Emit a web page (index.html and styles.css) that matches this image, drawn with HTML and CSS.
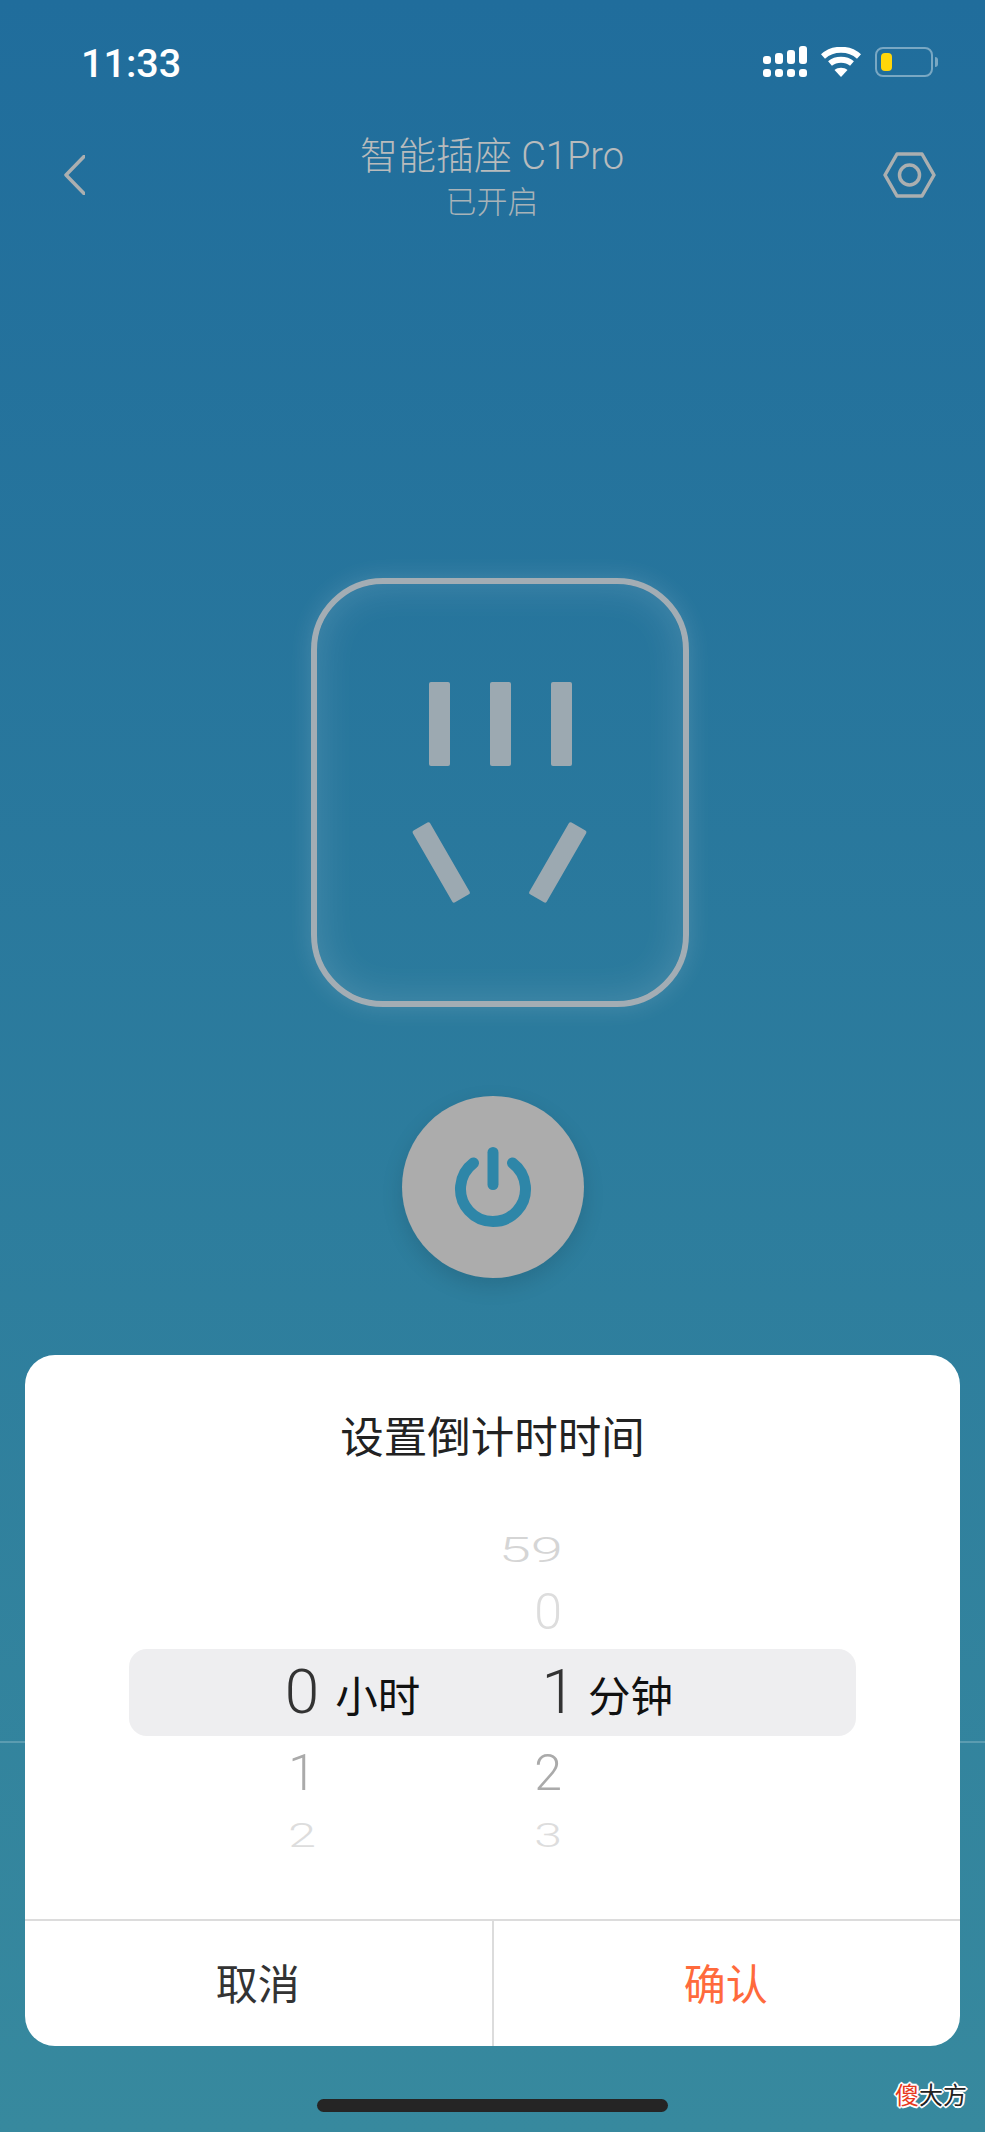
FILE: index.html
```html
<!DOCTYPE html>
<html lang="zh-CN">

<head>
    <meta charset="UTF-8">
    <title>智能插座 C1Pro</title>
    <link rel="stylesheet" href="styles.css">
</head>

<body>
    <div class="page">
        <div class="horizon"></div>

        <div class="status-bar">
            <span class="time">11:33</span>
            <div class="status-icons">
                <svg class="signal" width="44" height="32" viewBox="0 0 44 32">
                    <rect x="0" y="10" width="8" height="8" rx="3" />
                    <rect x="12" y="7" width="8" height="11" rx="3" />
                    <rect x="24" y="4" width="8" height="14" rx="3" />
                    <rect x="36" y="0" width="8" height="18" rx="3" />
                    <rect x="0" y="23" width="8" height="8" rx="3" />
                    <rect x="12" y="23" width="8" height="8" rx="3" />
                    <rect x="24" y="23" width="8" height="8" rx="3" />
                    <rect x="36" y="23" width="8" height="8" rx="3" />
                </svg>
                <svg class="wifi" width="40" height="30" viewBox="0 0 40 30">
                    <path d="M2 9.5 C12 0.5 28 0.5 38 9.5" />
                    <path d="M9 16.5 C15 11.5 25 11.5 31 16.5" />
                    <path class="wifi-dot" d="M13.5 23 C17 20 23 20 26.5 23 L20 30 Z" />
                </svg>
                <div class="battery">
                    <div class="battery-level"></div>
                </div>
                <div class="battery-nub"></div>
            </div>
        </div>

        <header class="nav">
            <svg class="back" width="21" height="40" viewBox="0 0 21 40">
                <path d="M20 1.5 L2 20 L20 38.5" />
            </svg>
            <div class="nav-title">
                <h1>智能插座 C1Pro</h1>
                <p>已开启</p>
            </div>
            <svg class="settings" width="53" height="46" viewBox="0 0 53 46">
                <path d="M14 2 H39 L51 23 L39 44 H14 L2 23 Z" />
                <circle cx="26.5" cy="23" r="10" />
            </svg>
        </header>

        <div class="socket">
            <svg width="366" height="417" viewBox="0 0 366 417">
                <rect x="112" y="98" width="21" height="84" rx="2" />
                <rect x="173" y="98" width="21" height="84" rx="2" />
                <rect x="234" y="98" width="21" height="84" rx="2" />
                <rect x="114" y="237" width="20" height="83" rx="2" transform="rotate(-30 124 278)" />
                <rect x="231" y="237" width="20" height="83" rx="2" transform="rotate(30 241 278)" />
            </svg>
        </div>

        <button class="power">
            <svg width="78" height="90" viewBox="0 0 78 90">
                <path d="M19.5 21 A32.5 32.5 0 1 0 58.5 21" />
                <path d="M39 10.5 V42.5" />
            </svg>
        </button>

        <section class="sheet">
            <h2 class="sheet-title">设置倒计时时间</h2>
            <div class="picker">
                <div class="row row-top">
                    <span class="cell"></span>
                    <span class="cell cell-min">59</span>
                </div>
                <div class="row row-dim">
                    <span class="cell"></span>
                    <span class="cell cell-min">0</span>
                </div>
                <div class="row row-selected">
                    <span class="cell">0<em class="unit">小时</em></span>
                    <span class="cell cell-min">1<em class="unit">分钟</em></span>
                </div>
                <div class="row row-near">
                    <span class="cell">1</span>
                    <span class="cell cell-min">2</span>
                </div>
                <div class="row row-far">
                    <span class="cell">2</span>
                    <span class="cell cell-min">3</span>
                </div>
            </div>
            <div class="actions">
                <button class="action">取消</button>
                <button class="action action-confirm">确认</button>
            </div>
        </section>

        <div class="home-bar"></div>
        <div class="watermark"><span class="watermark-red">傻</span>大方</div>
    </div>
</body>

</html>
```

FILE: styles.css
```css
* {
    box-sizing: border-box;
}

body {
    margin: 0;
    font-family: 'Noto Sans CJK SC', 'Noto Sans', sans-serif;
}

.page {
    position: relative;
    width: 985px;
    height: 2132px;
    overflow: hidden;
    display: flex;
    flex-direction: column;
    background: linear-gradient(180deg, #206d9c 0%, #37899e 100%);
}

.horizon {
    position: absolute;
    left: 0;
    right: 0;
    top: 1741px;
    height: 2px;
    background-color: rgba(255, 255, 255, 0.2);
}

/* Status bar */
.status-bar {
    height: 126px;
    padding: 0 47px 0 81px;
    display: flex;
    align-items: center;
    justify-content: space-between;
}

.time {
    font-family: 'Roboto', sans-serif;
    font-size: 39.5px;
    font-weight: 500;
    color: white;
}

.status-icons {
    display: flex;
    align-items: center;
    margin-top: -3px;
}

.signal {
    fill: white;
    margin-right: 14px;
}

.wifi {
    margin-right: 14px;
}

.wifi path {
    fill: none;
    stroke: white;
    stroke-width: 6;
}

.wifi .wifi-dot {
    fill: white;
    stroke: none;
}

.battery {
    width: 58px;
    height: 30px;
    padding: 4px;
    border: 2px solid rgba(255, 255, 255, 0.4);
    border-radius: 8px;
}

.battery-level {
    width: 11px;
    height: 100%;
    background-color: #ffd60a;
    border-radius: 4px;
}

.battery-nub {
    width: 3px;
    height: 10px;
    margin-left: 2px;
    background-color: rgba(255, 255, 255, 0.4);
    border-radius: 0 3px 3px 0;
}

/* Nav */
.nav {
    height: 98px;
    padding: 0 49px 0 64px;
    display: flex;
    align-items: center;
    justify-content: space-between;
}

.back path,
.settings path,
.settings circle {
    fill: none;
    stroke: #abafb0;
    stroke-width: 3.5;
    stroke-linecap: round;
    stroke-linejoin: round;
}

.nav-title {
    text-align: center;
    margin-left: 16px;
}

.nav-title h1 {
    margin: 0;
    font-family: 'Roboto', 'Noto Sans CJK SC', sans-serif;
    font-size: 38px;
    font-weight: 300;
    line-height: 50px;
    color: #b8bbbc;
}

.nav-title p {
    margin: 0;
    font-size: 31px;
    font-weight: 300;
    line-height: 38px;
    color: #a8b3b8;
}

/* Socket */
.socket {
    width: 378px;
    height: 429px;
    margin: 354px 0 0 311px;
    border: 6px solid #a3adb4;
    border-radius: 72px;
    box-shadow: 0 0 24px rgba(255, 255, 255, 0.14), inset 0 0 40px rgba(255, 255, 255, 0.15);
}

.socket svg {
    display: block;
    fill: #9ca9b1;
}

/* Power button */
.power {
    width: 182px;
    height: 182px;
    margin: 89px 0 0 401.5px;
    padding: 0;
    border: none;
    border-radius: 50%;
    background-color: #acacac;
    box-shadow: 0 8px 22px rgba(0, 0, 0, 0.12);
    display: flex;
    align-items: center;
    justify-content: center;
}

.power svg {
    fill: none;
    stroke: #2e86a8;
    stroke-width: 11;
    stroke-linecap: round;
}

/* Sheet */
.sheet {
    position: relative;
    width: 935px;
    height: 691px;
    margin: 77px 0 0 25px;
    background-color: white;
    border-radius: 30px;
    display: flex;
    flex-direction: column;
}

.sheet-title {
    margin: 0;
    height: 165px;
    font-size: 43.5px;
    font-weight: 400;
    line-height: 159px;
    text-align: center;
    color: #222;
}

.picker {
    height: 399px;
    font-family: 'Roboto', sans-serif;
    font-weight: 300;
}

.row {
    margin: 0 104px;
    padding-left: 50px;
    display: grid;
    grid-template-columns: 246px 246px;
    align-items: center;
}

.cell {
    position: relative;
    line-height: 1;
    text-align: center;
}

.cell-min {
    padding-right: 109px;
    text-align: right;
}

.row-top {
    height: 60px;
    font-size: 58px;
    color: #d5d5d5;
}

.row-top .cell {
    transform: scaleY(0.6);
}

.row-top .cell-min {
    padding-right: 108px;
}

.row-dim {
    height: 64px;
    margin-bottom: 5px;
    font-size: 50px;
    color: #ddd;
}

.row-near {
    height: 74px;
    font-size: 50px;
    color: #aaa;
}

.row-far {
    height: 52px;
    font-size: 50px;
    color: #ddd;
}

.row-far .cell {
    transform: scaleY(0.65);
}

.row-selected {
    height: 87px;
    padding-bottom: 2px;
    font-size: 62px;
    color: #333;
    background-color: #eeeef0;
    border-radius: 18px;
}

.row-selected .cell-min {
    padding-right: 95px;
}

.unit {
    position: absolute;
    top: 50%;
    margin: -28px 0 0 16px;
    font-family: 'Noto Sans CJK SC', sans-serif;
    font-size: 42.5px;
    font-style: normal;
    font-weight: 400;
    line-height: 60px;
    white-space: nowrap;
    text-align: left;
    color: #111;
}

.cell-min .unit {
    margin-left: 12px;
}

.actions {
    height: 127px;
    border-top: 2px solid #dcdcdc;
    display: grid;
    grid-template-columns: 1fr 1fr;
}

.action {
    padding: 0 2px 5px 0;
    border: none;
    background: none;
    font-family: inherit;
    font-size: 42px;
    color: #333;
}

.action-confirm {
    margin-left: -1px;
    border-left: 2px solid #dcdcdc;
    color: #ff6a3c;
}

/* Bottom */
.home-bar {
    width: 351px;
    height: 13px;
    margin: 53px 0 0 317px;
    background-color: #252525;
    border-radius: 7px;
}

.watermark {
    position: absolute;
    left: 895px;
    top: 2076px;
    font-size: 24px;
    line-height: 36px;
    color: #222;
    text-shadow: 1px 1px 0 white, -1px -1px 0 white, 1px -1px 0 white, -1px 1px 0 white, 2px 0 0 white, -2px 0 0 white, 0 2px 0 white, 0 -2px 0 white;
}

.watermark-red {
    color: #e8391c;
}
```
